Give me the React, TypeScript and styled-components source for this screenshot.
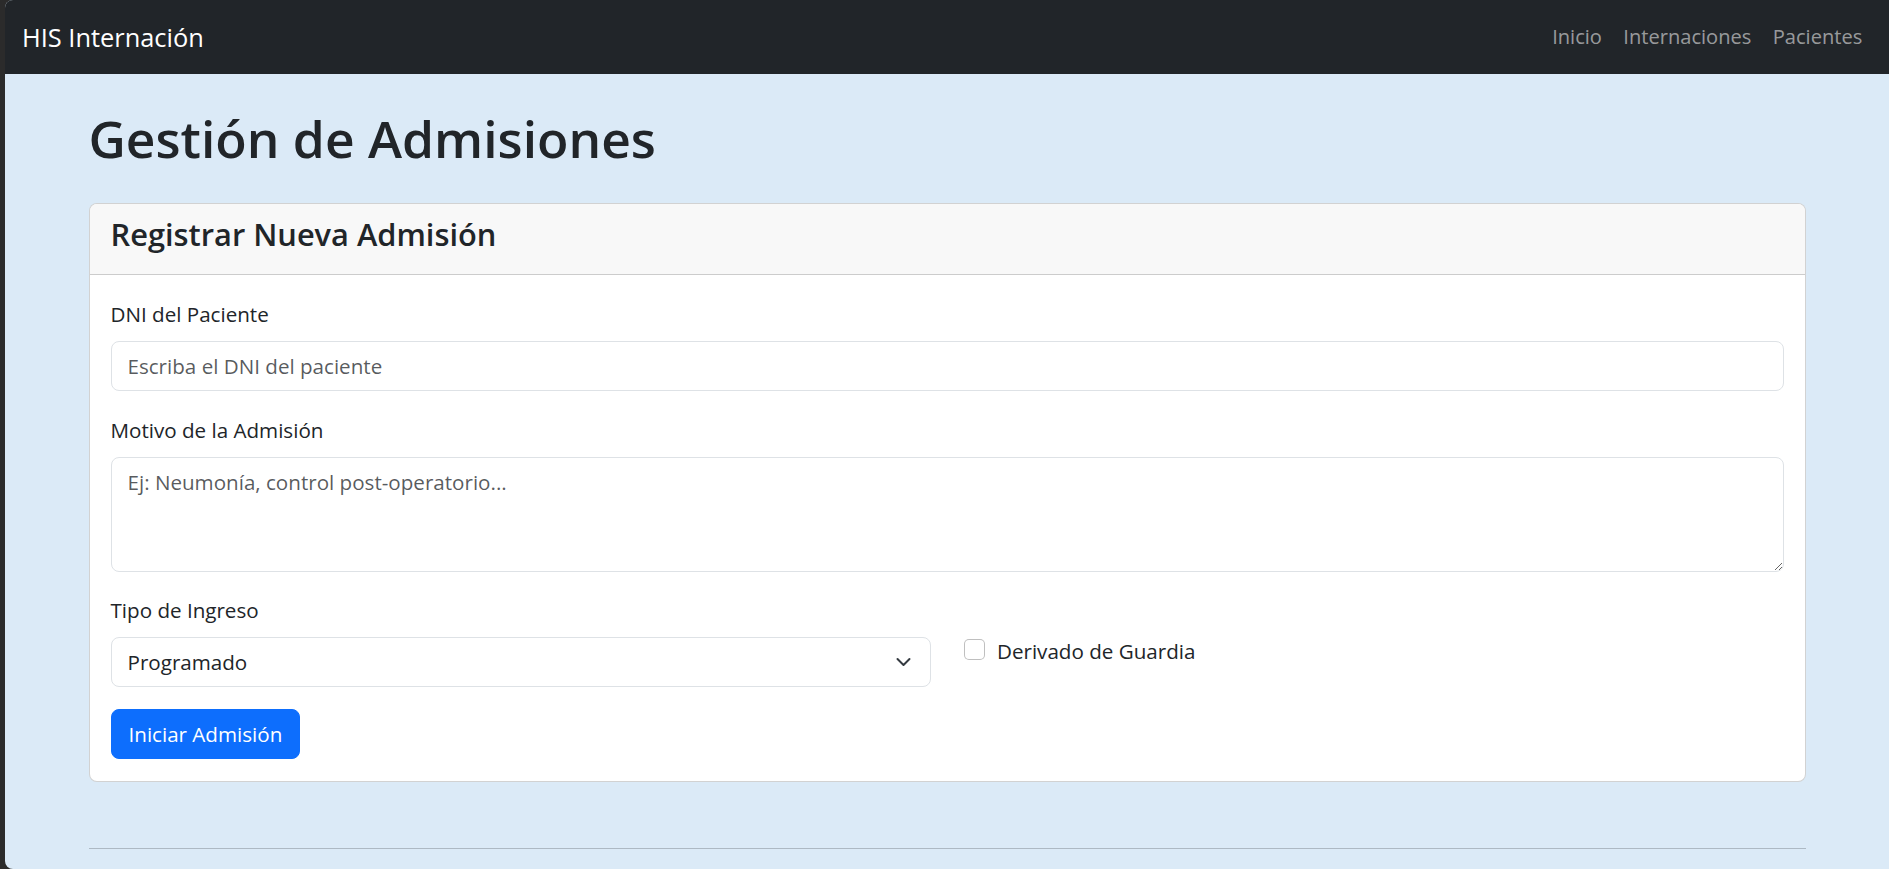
import React from 'react';
import styled, { createGlobalStyle } from 'styled-components';

const FONT = `"Open Sans", "Noto Sans", "Liberation Sans", sans-serif`;
const BODY_SIZE = '20.6px';

const Global = createGlobalStyle`
  * { box-sizing: border-box; }
  html, body { margin: 0; padding: 0; background: #2b2b2b; }
  body { font-family: ${FONT}; color: #212529; }
`;

const Frame = styled.div`
  margin-left: 5px;
  height: 100vh;
  background: #dbeaf7;
  border-radius: 8px 0 0 8px;
  overflow: hidden;
  display: flex;
  flex-direction: column;
`;

const Navbar = styled.nav`
  height: 74px;
  flex-shrink: 0;
  background: #212529;
  display: flex;
  align-items: center;
  justify-content: space-between;
  padding: 0 16px 0 17px;
`;

const Brand = styled.a`
  color: #fff;
  font-size: 25.4px;
  line-height: 40px;
  text-decoration: none;
`;

const NavList = styled.ul`
  display: flex;
  list-style: none;
  margin: 0;
  padding: 0;
`;

const NavLink = styled.a`
  display: block;
  padding: 0 10.7px;
  color: rgba(255, 255, 255, 0.55);
  font-size: 20.1px;
  line-height: 32px;
  text-decoration: none;
`;

const Main = styled.main`
  width: 1717px;
  margin: 0 auto;
  padding-top: 32px;
`;

const PageTitle = styled.h1`
  margin: 0 0 33px;
  font-size: 51.5px;
  font-weight: 600;
  line-height: 64px;
`;

const Card = styled.section`
  background: #fff;
  border: 1px solid rgba(0, 0, 0, 0.175);
  border-radius: 8px;
  overflow: hidden;
  margin-bottom: 66px;
`;

const CardHeader = styled.div`
  background: #f8f8f8;
  border-bottom: 1px solid rgba(0, 0, 0, 0.175);
  padding: 11px 21px 21px;
`;

const CardTitle = styled.h4`
  margin: 0;
  font-size: 30.8px;
  font-weight: 600;
  line-height: 38px;
`;

const CardBody = styled.form`
  padding: 23px 21px 22px;
`;

const Field = styled.div`
  margin-bottom: 22.5px;
`;

const Label = styled.label`
  display: block;
  font-size: ${BODY_SIZE};
  line-height: 32px;
  margin-bottom: 11px;
`;

const controlBase = `
  display: block;
  width: 100%;
  font-family: ${FONT};
  font-size: ${BODY_SIZE};
  color: #212529;
  background: #fff;
  border: 1px solid #dee2e6;
  border-radius: 8px;
  outline: none;
`;

const Input = styled.input`
  ${controlBase}
  height: 50px;
  padding: 0 16px;
  &::placeholder { color: rgba(33, 37, 41, 0.75); }
`;

const TextArea = styled.textarea`
  ${controlBase}
  height: 115px;
  padding: 8px 16px;
  line-height: 32px;
  resize: vertical;
  &::placeholder { color: rgba(33, 37, 41, 0.75); }
`;

const Row = styled.div`
  display: grid;
  grid-template-columns: 1fr 1fr;
  column-gap: 32px;
  margin-bottom: 21.5px;
`;

const SelectWrap = styled.div`
  position: relative;
`;

const Select = styled.select`
  ${controlBase}
  height: 50px;
  padding: 0 56px 0 16px;
  appearance: none;
  -webkit-appearance: none;
`;

const Chevron = styled.svg`
  position: absolute;
  right: 17px;
  top: 50%;
  width: 21px;
  height: 16px;
  margin-top: -8px;
  pointer-events: none;
`;

const CheckCol = styled.div`
  padding-top: 41px;
`;

const Check = styled.label`
  display: flex;
  align-items: flex-start;
  gap: 12px;
  font-size: ${BODY_SIZE};
  line-height: 32px;
`;

const CheckBox = styled.input`
  appearance: none;
  -webkit-appearance: none;
  flex-shrink: 0;
  width: 21px;
  height: 21px;
  margin: 4px 0 0 1px;
  background: #fff;
  border: 1px solid rgba(0, 0, 0, 0.25);
  border-radius: 5px;
`;

const PrimaryButton = styled.button`
  height: 50px;
  padding: 0 17px;
  font-family: ${FONT};
  font-size: ${BODY_SIZE};
  color: #fff;
  background: #0d6efd;
  border: 1px solid #0d6efd;
  border-radius: 8px;
  cursor: pointer;
`;

const Divider = styled.hr`
  margin: 0;
  border: 0;
  border-top: 1px solid #adb9c4;
`;

export default function App() {
  return (
    <>
      <Global />
      <Frame>
        <Navbar>
          <Brand href="#">HIS Internación</Brand>
          <NavList>
            <li><NavLink href="#">Inicio</NavLink></li>
            <li><NavLink href="#">Internaciones</NavLink></li>
            <li><NavLink href="#">Pacientes</NavLink></li>
          </NavList>
        </Navbar>
        <Main>
          <PageTitle>Gestión de Admisiones</PageTitle>
          <Card>
            <CardHeader>
              <CardTitle>Registrar Nueva Admisión</CardTitle>
            </CardHeader>
            <CardBody onSubmit={(e) => e.preventDefault()}>
              <Field>
                <Label htmlFor="dni">DNI del Paciente</Label>
                <Input id="dni" type="text" placeholder="Escriba el DNI del paciente" />
              </Field>
              <Field>
                <Label htmlFor="motivo">Motivo de la Admisión</Label>
                <TextArea id="motivo" rows={3} placeholder="Ej: Neumonía, control post-operatorio..." />
              </Field>
              <Row>
                <div>
                  <Label htmlFor="tipo">Tipo de Ingreso</Label>
                  <SelectWrap>
                    <Select id="tipo" defaultValue="Programado">
                      <option>Programado</option>
                      <option>Urgencia</option>
                    </Select>
                    <Chevron viewBox="0 0 16 16" preserveAspectRatio="xMidYMid meet">
                      <path d="m2 5 6 6 6-6" fill="none" stroke="#343a40" strokeWidth="2" strokeLinecap="round" strokeLinejoin="round" />
                    </Chevron>
                  </SelectWrap>
                </div>
                <CheckCol>
                  <Check>
                    <CheckBox type="checkbox" />
                    Derivado de Guardia
                  </Check>
                </CheckCol>
              </Row>
              <PrimaryButton type="submit">Iniciar Admisión</PrimaryButton>
            </CardBody>
          </Card>
          <Divider />
        </Main>
      </Frame>
    </>
  );
}
